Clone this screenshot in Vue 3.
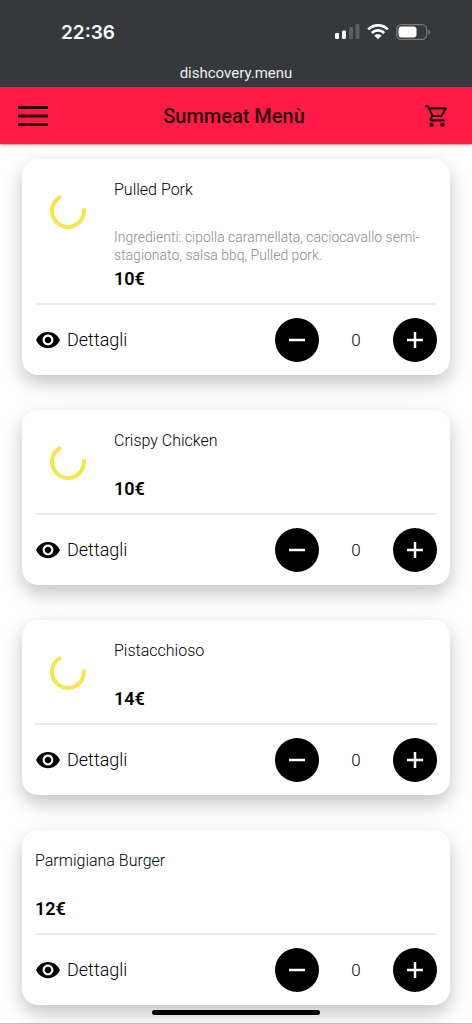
<script setup>
import { reactive } from 'vue'

const dishes = reactive([
  {
    id: 'pork',
    name: 'Pulled Pork',
    ingredients: 'Ingredienti: cipolla caramellata, caciocavallo semi-stagionato, salsa bbq, Pulled pork.',
    price: 10,
    loading: true,
    quantity: 0
  },
  { id: 'chicken', name: 'Crispy Chicken', price: 10, loading: true, quantity: 0 },
  { id: 'pistachio', name: 'Pistacchioso', price: 14, loading: true, quantity: 0 },
  { id: 'parmigiana', name: 'Parmigiana Burger', price: 12, loading: false, quantity: 0 }
])

function remove(dish) {
  if (dish.quantity > 0) dish.quantity -= 1
}

function add(dish) {
  dish.quantity += 1
}
</script>

<template>
  <div class="page">
    <div class="system">
      <div class="status">
        <span class="clock">22:36</span>
        <div class="indicators">
          <svg width="25" height="16" viewBox="0 0 25 16" aria-hidden="true">
            <rect x="0" y="9" width="4" height="6" rx="1.2" fill="#fff" />
            <rect x="7" y="6.500" width="4" height="8.500" rx="1.2" fill="#fff" />
            <rect x="14" y="3" width="4" height="12" rx="1.2" fill="#5a5e61" />
            <rect x="20.500" y="0" width="4" height="15" rx="1.2" fill="#5a5e61" />
          </svg>
          <svg width="22" height="16" viewBox="0 0 22 16" aria-hidden="true">
            <g fill="none" stroke="#fff" stroke-width="2.700">
              <path d="M1.200 5.400C6.800-.1 15.200-.1 20.800 5.400" />
              <path d="M4.800 9C8.300 5.600 13.700 5.600 17.200 9" />
            </g>
            <path d="M7.400 11.600C9.400 9.800 12.600 9.800 14.600 11.600L11 15.300Z" fill="#fff" />
          </svg>
          <svg width="35" height="16" viewBox="0 0 35 16" aria-hidden="true">
            <rect x=".7" y=".7" width="30" height="14.600" rx="4.600" fill="none" stroke="#74787a" stroke-width="1.200" />
            <rect x="2.500" y="2.500" width="18" height="11" rx="3" fill="#fff" />
            <path d="M32.300 5.400C34.800 6.200 34.800 9.800 32.300 10.600Z" fill="#74787a" />
          </svg>
        </div>
      </div>
      <div class="address">dishcovery.menu</div>
    </div>

    <header class="bar">
      <button class="icon-button" type="button" aria-label="Menu">
        <svg width="30" height="20" viewBox="0 0 30 20" aria-hidden="true">
          <path d="M0 1.500H30M0 10H30M0 18.500H30" stroke="#230006" stroke-width="3" />
        </svg>
      </button>
      <h1>Summeat Menù</h1>
      <button class="icon-button cart" type="button" aria-label="Carrello">
        <svg width="26" height="26" viewBox="0 0 24 24" aria-hidden="true">
          <path
            fill="#2a0008"
            d="M15.550 13c.75 0 1.410-.41 1.750-1.030l3.580-6.490A.996.996 0 0 0 20.010 4H5.210l-.94-2H1v2h2l3.600 7.590-1.350 2.440C4.520 15.370 5.480 17 7 17h12v-2H7l1.100-2h7.450zM6.160 6h12.150l-2.760 5H8.530L6.160 6zM7 18c-1.100 0-1.990.9-1.990 2S5.900 22 7 22s2-.9 2-2-.9-2-2-2zm10 0c-1.100 0-1.990.9-1.990 2s.89 2 1.990 2 2-.9 2-2-.9-2-2-2z"
          />
        </svg>
      </button>
    </header>

    <main class="menu">
      <article v-for="dish in dishes" :key="dish.id" class="card">
        <div class="body">
          <div v-if="dish.loading" class="photo">
            <svg width="36" height="36" viewBox="0 0 36 36" role="img" aria-label="Caricamento">
              <path
                d="M9.500 4.400A16 16 0 1 0 34 17"
                fill="none"
                stroke="#f6e64c"
                stroke-width="4"
                stroke-linecap="round"
              />
            </svg>
          </div>
          <div class="info">
            <h2>{{ dish.name }}</h2>
            <p v-if="dish.ingredients" class="ingredients">{{ dish.ingredients }}</p>
            <p class="price">{{ dish.price }}€</p>
          </div>
        </div>
        <div class="actions">
          <button class="details" type="button">
            <svg width="26" height="26" viewBox="0 0 24 24" aria-hidden="true">
              <path
                d="M12 4.500C7 4.500 2.730 7.610 1 12c1.730 4.390 6 7.500 11 7.500s9.270-3.110 11-7.500c-1.730-4.390-6-7.500-11-7.500zM12 17c-2.760 0-5-2.240-5-5s2.240-5 5-5 5 2.240 5 5-2.240 5-5 5zm0-8c-1.660 0-3 1.340-3 3s1.340 3 3 3 3-1.340 3-3-1.340-3-3-3z"
              />
            </svg>
            <span>Dettagli</span>
          </button>
          <div class="stepper">
            <button class="round" type="button" :aria-label="`Rimuovi ${dish.name}`" @click="remove(dish)">
              <svg width="16" height="16" viewBox="0 0 16 16" aria-hidden="true">
                <path d="M0 8H16" stroke="#fff" stroke-width="2.500" />
              </svg>
            </button>
            <output>{{ dish.quantity }}</output>
            <button class="round" type="button" :aria-label="`Aggiungi ${dish.name}`" @click="add(dish)">
              <svg width="16" height="16" viewBox="0 0 16 16" aria-hidden="true">
                <path d="M0 8H16M8 0V16" stroke="#fff" stroke-width="2.500" />
              </svg>
            </button>
          </div>
        </div>
      </article>
    </main>
    <div class="home-indicator"></div>
  </div>
</template>

<style>
body {
  margin: 0;
  background: #fff;
}
</style>

<style scoped>
.page {
  font-family: Roboto, "Liberation Sans", sans-serif;
  font-weight: 300;
  color: #000;
}

button {
  padding: 0;
  border: 0;
  background: none;
  font: inherit;
  color: inherit;
  cursor: pointer;
}

svg {
  display: block;
}

h1,
h2,
p {
  margin: 0;
}

.system {
  background: #35393c;
  color: #fff;
}

.status {
  display: flex;
  align-items: center;
  justify-content: space-between;
  height: 64px;
  padding: 0 41px 0 61px;
}

.clock {
  font-family: Inter, sans-serif;
  font-size: 19px;
  font-weight: 600;
}

.indicators {
  display: flex;
  gap: 7px;
}

.address {
  padding-bottom: 5px;
  font-size: 15px;
  font-weight: 400;
  line-height: 18px;
  text-align: center;
  color: #eeeeef;
}

.bar {
  position: relative;
  display: grid;
  grid-template-columns: 1fr auto 1fr;
  align-items: center;
  height: 57px;
  padding: 0 22px 0 18px;
  background: #ff1a47;
  box-shadow: 0 1px 2px rgba(160, 30, 50, 0.6);
}

.bar h1 {
  font-size: 20px;
  font-weight: 500;
  line-height: 24px;
  color: #2a0008;
}

.icon-button {
  justify-self: start;
}

.cart {
  justify-self: end;
}

.menu {
  display: flex;
  flex-direction: column;
  gap: 35px;
  padding: 15px 22px 18px;
  border-bottom: 1px solid #c4c4c4;
}

.card {
  border-radius: 16px;
  background: #fff;
  box-shadow: 0 8px 26px rgba(0, 0, 0, 0.12), 0 8px 16px rgba(0, 0, 0, 0.13);
}

.body {
  display: flex;
  margin: 0 13px;
  padding: 21px 0 14px;
  border-bottom: 2px solid #ebebeb;
}

.photo {
  flex: none;
  width: 65px;
  margin-right: 14px;
  padding-top: 13px;
}

.photo svg {
  margin: 0 auto;
}

.info {
  flex: 1;
  min-width: 0;
}

h2 {
  margin-bottom: 28px;
  font-size: 16px;
  font-weight: 300;
  line-height: 20px;
}

.ingredients {
  margin-bottom: 5px;
  font-size: 14px;
  line-height: 18px;
  color: #8c8c8c;
}

.price {
  font-size: 18px;
  font-weight: 600;
  line-height: 20px;
}

.actions {
  display: flex;
  align-items: center;
  justify-content: space-between;
  padding: 13px;
}

.details {
  display: flex;
  align-items: center;
  gap: 6px;
  font-size: 18px;
  line-height: 20px;
}

.stepper {
  display: flex;
  align-items: center;
}

.stepper output {
  width: 74px;
  font-size: 17px;
  line-height: 20px;
  text-align: center;
}

.round {
  display: grid;
  place-items: center;
  width: 44px;
  height: 44px;
  border-radius: 50%;
  background: #000;
}

.home-indicator {
  position: fixed;
  bottom: 9px;
  left: 50%;
  width: 168px;
  height: 5px;
  margin-left: -84px;
  border-radius: 3px;
  background: #000;
}
</style>
